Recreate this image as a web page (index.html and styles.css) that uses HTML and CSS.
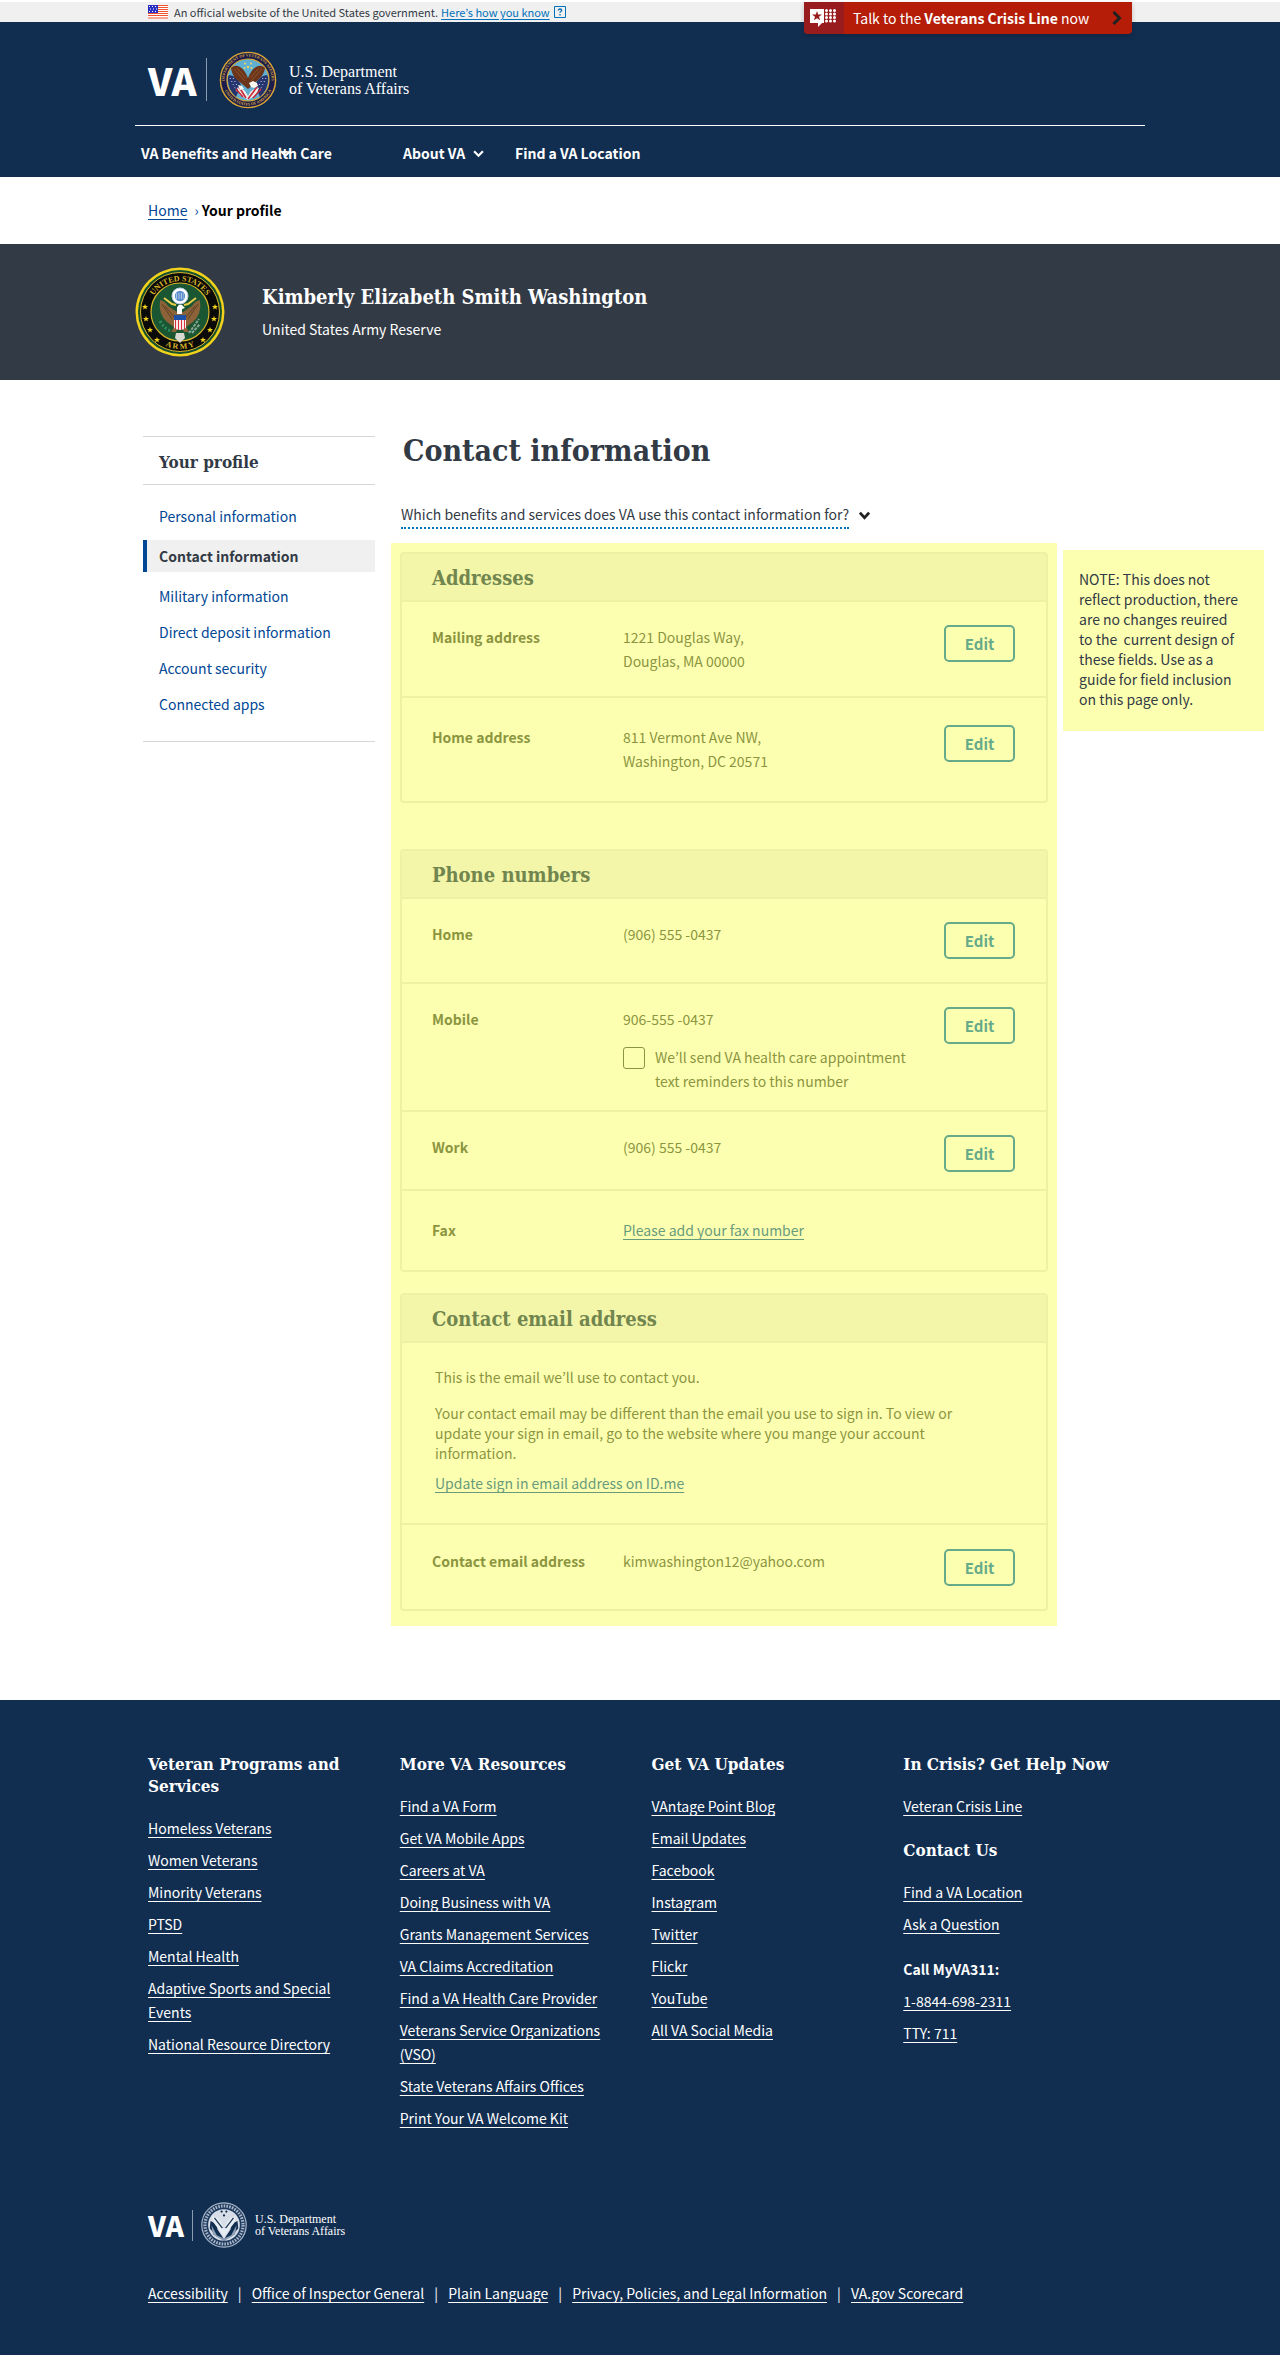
FILE: index.html
```html
<!DOCTYPE html>
<html lang="en">
<head>
<meta charset="utf-8">
<meta name="viewport" content="width=device-width, initial-scale=1">
<title>Contact information | Veterans Affairs</title>
<link rel="stylesheet" href="styles.css">
</head>
<body>
<div class="banner">
  <div class="wrap banner-row">
    <svg class="flag" viewBox="0 0 20 14" aria-hidden="true"><path fill="#fff" d="M0 0h20v14H0z"/><path stroke="#f0532d" d="M0 .5h20M0 2.5h20M0 4.5h20M0 6.5h20M0 8.5h20M0 10.5h20M0 13h20"/><path fill="#2a2fc4" d="M0 0h10v8H0z"/><path stroke="#fff" stroke-dasharray="1 2" d="M1 1.500h8M2 4h8M1 6.500h8"/></svg>
    <span>An official website of the United States government.</span>
    <a href="#know">Here’s how you know</a>
    <svg class="help" viewBox="0 0 12 12" aria-hidden="true"><path fill="none" stroke="#0071bb" d="M.5.5h11v11H.5z"/><path fill="none" stroke="#0071bb" stroke-width="1.300" d="M4.300 4.500q0-1.500 1.700-1.500t1.700 1.300q0 .8-.9 1.200t-.8 1.300M6 8v1.400"/></svg>
    <a class="crisis" href="#crisis">
      <span class="crisis-icon"><svg viewBox="0 0 30 20" aria-hidden="true"><path fill="#fff" d="M1 1h14v14h-2l-4 4v-4H1z"/><path fill="#981b1e" d="m8 3 1.200 3.500H13l-3 2.200 1.100 3.600L8 10.200l-3.100 2.100L6 8.700 3 6.500h3.800z"/><path stroke="#fff" stroke-width="3" stroke-linecap="round" stroke-dasharray="0 4" d="M17.500 2.500h12M17.500 6h12M17.500 9.500h12M17.500 13h12"/></svg></span>
      <span class="crisis-text">Talk to the <b>Veterans Crisis Line</b> now</span>
      <svg class="crisis-chev" viewBox="0 0 10 14" aria-hidden="true"><path fill="none" stroke="#212121" stroke-width="3" d="m1.500 1 6 6-6 6"/></svg>
    </a>
  </div>
</div>

<header class="header">
  <div class="wrap">
    <a class="logo" href="#home">
      <span class="logo-va">VA</span><span class="logo-bar"></span>
      <svg class="logo-seal" viewBox="0 0 58 58" aria-hidden="true">
        <defs><path id="va-top" d="M5.500 29a23.500 23.500 0 0 1 47 0"/><path id="va-bottom" d="M3.500 29a25.500 25.500 0 0 0 51 0"/></defs>
        <circle cx="29" cy="29" r="28.500" fill="#1c1b4d"/>
        <circle cx="29" cy="29" r="27.600" fill="none" stroke="#d9a935" stroke-width="1.400"/>
        <circle cx="29" cy="29" r="21" fill="#5fb0d2" stroke="#d9a935" stroke-width="1.200"/>
        <path fill="#25346e" d="M10 24q7 0 12 10l-5 12Q8 38 9 26zM48 24q-7 0-12 10l5 12q9-8 8-20z"/>
        <path stroke="#dfe6f3" stroke-dasharray="1 2.500" d="m11 27 7 14M14 27l6 11m27-11-7 14m4-14-6 11"/>
        <path fill="#f1efe8" d="M18 37q5 0 8 3l3 5 3-5q4-3 8-3l-3 7-8 5-8-5z"/>
        <path stroke="#c8283a" stroke-width="1.600" fill="none" d="m17 38 7 8m-4-10 7 11m15-9-8 9m4-11-9 12"/>
        <path fill="#6b351c" d="M12 17q4-4 9-1 5 3 8 11 3-8 8-11 5-3 9 1-1 7-6 11l-5 5-6 5-6-5-6-5q-4-4-5-11z"/>
        <path stroke="#8f5129" fill="none" d="m15 18 11 12m-8-13 9 10m16-9L32 30m8-13-9 10"/>
        <path fill="#faf7ef" d="m30 32 4-2 4 2 1 3-4 2-3-1zM19 34l4 1 2 3-4 1z"/>
        <g fill="#f3d65a"><circle cx="26" cy="12.500" r="1"/><circle cx="32" cy="12.500" r="1"/><circle cx="29" cy="16" r="1.200"/><circle cx="25.500" cy="17" r=".9"/><circle cx="32.500" cy="17" r=".9"/></g>
        <text class="seal-text" fill="#d9a935"><textPath href="#va-top" startOffset="50%">DEPARTMENT OF VETERANS AFFAIRS</textPath></text>
        <text class="seal-text" fill="#d9a935"><textPath href="#va-bottom" startOffset="50%">UNITED STATES OF AMERICA</textPath></text>
      </svg>
      <span class="logo-name">U.S. Department<br>of Veterans Affairs</span>
    </a>
    <nav class="nav" aria-label="Main">
      <button type="button" class="nav-item nav-benefits">VA Benefits and Health Care<svg class="chev over" viewBox="0 0 10 8" aria-hidden="true"><path fill="none" stroke="currentColor" stroke-width="2" d="m1 2 4 4 4-4"/></svg></button>
      <button type="button" class="nav-item nav-about">About VA <svg class="chev" viewBox="0 0 10 8" aria-hidden="true"><path fill="none" stroke="currentColor" stroke-width="2" d="m1 2 4 4 4-4"/></svg></button>
      <a class="nav-item" href="#find">Find a VA Location</a>
    </nav>
  </div>
</header>

<nav class="wrap crumbs" aria-label="Breadcrumb"><a href="#home">Home</a><span class="sep">›</span><b>Your profile</b></nav>

<section class="profile">
  <div class="wrap profile-row">
    <svg class="army" viewBox="0 0 90 90" aria-hidden="true">
      <defs><path id="army-top" d="M14 45a31 31 0 0 1 62 0"/><path id="army-bottom" d="M8 45a37 37 0 0 0 74 0"/></defs>
      <circle cx="45" cy="45" r="44.500" fill="#f2d21b"/><circle cx="45" cy="45" r="42" fill="#15502f"/>
      <circle cx="45" cy="45" r="39.500" fill="#0a0a08" stroke="#d9b62a"/>
      <circle cx="45" cy="45" r="29" fill="#1a5632" stroke="#d9b62a" stroke-width="1.200"/>
      <path fill="#8c6239" d="M25 33q5 1 8 6l9 6h6l9-6q3-5 8-6 2 14-7 22l-7 5 3 5h-5l-2-5h-4l-2 5h-5l3-5-7-5q-9-8-7-22z"/>
      <path fill="none" stroke="#5d4024" d="m27 37 10 15m-7-13 9 11m24-13L53 52m7-13-9 11"/>
      <path fill="none" stroke="#e9cf46" stroke-width="2" d="m29 31 8 6 4 1m20-7-8 6-4 1"/>
      <circle cx="45" cy="29" r="8" fill="#fff" stroke="#b9cde6"/><circle cx="45" cy="29" r="5.200" fill="#5d8fd0"/>
      <path stroke="#fff" stroke-dasharray="1 1.500" d="M41 27h8M41 29h8M41 31h8"/>
      <path fill="#fff" d="M42 41q1-4 5-3l3 3-3 1v5h-5zM39 50h12v11q-6 4-12 0z"/>
      <path fill="#1d52a8" d="M39 48h12v5H39z"/>
      <path stroke="#d6323b" stroke-width="1.200" d="M40.500 53v9m3-9v10m3-10v10m3-10v9"/>
      <path fill="#d9d9d2" d="M41 66h8l1 5-5 5-5-5z"/>
      <path fill="none" stroke="#2f8a61" stroke-width="3" stroke-dasharray="2 2" d="M25 54q5 9 12 10"/>
      <path fill="none" stroke="#87a596" stroke-width="2" stroke-dasharray="3 1" d="m54 66 10-14m-7 14 8-9"/>
      <g fill="#f2d21b"><path id="st" d="m10 37 .8 2 2.200.1-1.700 1.300.6 2.100-1.900-1.200-1.900 1.200.6-2.100L7 39.100l2.200-.1z"/><use href="#st" x="1" y="12"/><use href="#st" x="5" y="23"/><use href="#st" x="12" y="33"/><use href="#st" x="70"/><use href="#st" x="69" y="12"/><use href="#st" x="65" y="23"/><use href="#st" x="58" y="33"/></g>
      <text class="army-text" fill="#d9b62a"><textPath href="#army-top" startOffset="50%">UNITED STATES</textPath></text>
      <text class="army-text" fill="#d9b62a"><textPath href="#army-bottom" startOffset="50%">A R M Y</textPath></text>
    </svg>
    <div>
      <p class="profile-name">Kimberly Elizabeth Smith Washington</p>
      <p class="profile-branch">United States Army Reserve</p>
    </div>
  </div>
</section>

<div class="layout">
  <nav class="side" aria-label="Your profile">
    <h2>Your profile</h2>
    <ul>
      <li><a href="#personal">Personal information</a></li>
      <li><a class="current" href="#contact" aria-current="page">Contact information</a></li>
      <li><a href="#military">Military information</a></li>
      <li><a href="#deposit">Direct deposit information</a></li>
      <li><a href="#security">Account security</a></li>
      <li><a href="#apps">Connected apps</a></li>
    </ul>
  </nav>

  <main class="main">
    <h1>Contact information</h1>
    <button type="button" class="disclose"><span>Which benefits and services does VA use this contact information for?</span><svg class="chev" viewBox="0 0 10 8" aria-hidden="true"><path fill="none" stroke="#212121" stroke-width="2.500" d="m.8 1.500 4.200 4.500 4.200-4.500"/></svg></button>

    <div class="fields">
      <section class="card">
        <h2>Addresses</h2>
        <div class="row"><h3>Mailing address</h3><p>1221 Douglas Way,<br>Douglas, MA 00000</p><button type="button" class="edit" aria-label="Edit mailing address">Edit</button></div>
        <div class="row roomy"><h3>Home address</h3><p>811 Vermont Ave NW,<br>Washington, DC 20571</p><button type="button" class="edit" aria-label="Edit home address">Edit</button></div>
      </section>

      <section class="card phones">
        <h2>Phone numbers</h2>
        <div class="row"><h3>Home</h3><p>(906) 555 -0437</p><button type="button" class="edit" aria-label="Edit home phone">Edit</button></div>
        <div class="row tight"><h3>Mobile</h3>
          <div>
            <p>906-555 -0437</p>
            <div class="reminder"><input type="checkbox" id="reminders"><label for="reminders">We’ll send VA health care appointment text reminders to this number</label></div>
          </div>
          <button type="button" class="edit" aria-label="Edit mobile phone">Edit</button></div>
        <div class="row tight"><h3>Work</h3><p>(906) 555 -0437</p><button type="button" class="edit" aria-label="Edit work phone">Edit</button></div>
        <div class="row roomy"><h3>Fax</h3><p><a href="#fax">Please add your fax number</a></p></div>
      </section>

      <section class="card email">
        <h2>Contact email address</h2>
        <div class="about">
          <p>This is the email we’ll use to contact you.</p>
          <p>Your contact email may be different than the email you use to sign in. To view or update your sign in email, go to the website where you mange your account information.</p>
          <a href="#idme">Update sign in email address on ID.me</a>
        </div>
        <div class="row"><h3>Contact email address</h3><p>kimwashington12@yahoo.com</p><button type="button" class="edit" aria-label="Edit contact email address">Edit</button></div>
      </section>
    </div>
  </main>

  <aside class="note">NOTE: This does not<br>reflect production, there<br>are no changes reuired<br>to the&nbsp; current design of<br>these fields. Use as a<br>guide for field inclusion<br>on this page only.</aside>
</div>

<footer class="footer">
  <div class="foot-wrap">
    <div class="foot-cols">
      <section>
        <h2>Veteran Programs and Services</h2>
        <ul><li><a href="#f1">Homeless Veterans</a></li><li><a href="#f2">Women Veterans</a></li><li><a href="#f3">Minority Veterans</a></li><li><a href="#f4">PTSD</a></li><li><a href="#f5">Mental Health</a></li><li><a href="#f6">Adaptive Sports and Special Events</a></li><li><a href="#f7">National Resource Directory</a></li></ul>
      </section>
      <section>
        <h2>More VA Resources</h2>
        <ul><li><a href="#g1">Find a VA Form</a></li><li><a href="#g2">Get VA Mobile Apps</a></li><li><a href="#g3">Careers at VA</a></li><li><a href="#g4">Doing Business with VA</a></li><li><a href="#g5">Grants Management Services</a></li><li><a href="#g6">VA Claims Accreditation</a></li><li><a href="#g7">Find a VA Health Care Provider</a></li><li><a href="#g8">Veterans Service Organizations (VSO)</a></li><li><a href="#g9">State Veterans Affairs Offices</a></li><li><a href="#g10">Print Your VA Welcome Kit</a></li></ul>
      </section>
      <section>
        <h2>Get VA Updates</h2>
        <ul><li><a href="#h1">VAntage Point Blog</a></li><li><a href="#h2">Email Updates</a></li><li><a href="#h3">Facebook</a></li><li><a href="#h4">Instagram</a></li><li><a href="#h5">Twitter</a></li><li><a href="#h6">Flickr</a></li><li><a href="#h7">YouTube</a></li><li><a href="#h8">All VA Social Media</a></li></ul>
      </section>
      <section>
        <h2>In Crisis? Get Help Now</h2>
        <ul><li><a href="#i1">Veteran Crisis Line</a></li></ul>
        <h2>Contact Us</h2>
        <ul><li><a href="#i2">Find a VA Location</a></li><li><a href="#i3">Ask a Question</a></li></ul>
        <h3>Call MyVA311:</h3>
        <ul><li><a href="#i4">1-8844-698-2311</a></li><li><a href="#i5">TTY: 711</a></li></ul>
      </section>
    </div>
    <a class="foot-logo" href="#home">
      <span class="foot-va">VA</span><span class="foot-bar"></span>
      <svg class="foot-seal" viewBox="0 0 58 58" aria-hidden="true">
        <circle cx="29" cy="29" r="28" fill="#1e3a5e" stroke="#a9b6c8" stroke-width="1.500"/>
        <circle cx="29" cy="29" r="24" fill="none" stroke="#a9b6c8" stroke-width="4" stroke-dasharray="2 1.500"/>
        <circle cx="29" cy="29" r="20" fill="#d7dee8"/>
        <path fill="#112e51" d="M12 24q7 2 9 11l8 12 8-12q2-9 9-11l1 9-8 10-10 6-10-6-8-10z"/>
        <path fill="#8fa2b9" d="m13 29 7 13 9 4 9-4 7-13-2 12-14 8-14-8z"/>
        <path fill="#e8edf3" d="M14 18q8 0 13 11l2 7 2-7q5-11 13-11-1 9-7 14l-8 12-8-12q-6-5-7-14z"/>
        <path stroke="#112e51" stroke-width="1.500" fill="none" d="m17 20 10 13m14-13L31 33"/>
        <g fill="#112e51"><circle cx="26" cy="12" r="1.400"/><circle cx="32" cy="12" r="1.400"/><circle cx="29" cy="17" r="1.400"/></g>
      </svg>
      <span class="foot-name">U.S. Department<br>of Veterans Affairs</span>
    </a>
    <ul class="legal"><li><a href="#j1">Accessibility</a></li><li><a href="#j2">Office of Inspector General</a></li><li><a href="#j3">Plain Language</a></li><li><a href="#j4">Privacy, Policies, and Legal Information</a></li><li><a href="#j5">VA.gov Scorecard</a></li></ul>
  </div>
</footer>
</body>
</html>
```
FILE: styles.css
```css
:root {
  --navy: #112e51;
  --ink: #323a45;
  --link: #004795;
  --yellow: #fdffb0;
  --line: #eef0a2;
  --olive: #8b9540;
  --teal: #66aa8a;
  --sans: "Noto Sans CJK JP", "Noto Sans", sans-serif;
  --slab: "DejaVu Serif Condensed", "DejaVu Serif", serif;
}

* { box-sizing: border-box; }
body { margin: 0; background: #fff; color: var(--ink); font: 14px/24px var(--sans); }
h1, h2, h3, p, ul { margin: 0; padding: 0; }
ul { list-style: none; }
button { padding: 0; border: 0; background: none; color: inherit; font: inherit; cursor: pointer; }
svg { display: block; flex: none; }
a { color: var(--link); text-underline-offset: 3px; }
.wrap { max-width: 1010px; margin: 0 auto; }

/* Government banner */
.banner { margin-top: 2px; background: #f0f0f0; font-size: 11px; line-height: 20px; }
.banner-row { position: relative; display: flex; align-items: center; padding-left: 13px; }
.banner a:not(.crisis) { margin: 0 4px 0 3px; color: #0071bb; text-underline-offset: 2px; }
.flag { width: 20px; height: 14px; margin-right: 6px; }
.help { width: 12px; height: 12px; }
.crisis { position: absolute; top: 0; right: 13px; display: flex; align-items: center; width: 328px; height: 32px; overflow: hidden; border-radius: 0 0 4px 4px; background: #b51d09; box-shadow: 0 2px 5px #0003; color: #fff; font-size: 14px; text-decoration: none; }
.crisis-icon { display: flex; align-items: center; justify-content: center; width: 40px; height: 100%; background: #981b1e; }
.crisis-icon svg { width: 30px; height: 20px; }
.crisis-text { flex: 1; padding-left: 9px; white-space: nowrap; }
.crisis-chev { width: 10px; height: 14px; margin-right: 10px; }

/* Header */
.header { background: var(--navy); color: #fff; }
.logo { display: flex; align-items: center; height: 104px; padding: 12px 0 0 13px; border-bottom: 1px solid #fff; color: #fff; text-decoration: none; }
.logo-va { width: 48px; font-size: 38px; font-weight: 900; line-height: 40px; }
.logo-bar { width: 1px; height: 43px; margin: 0 12px 0 10px; background: #8b9bb0; }
.logo-seal { width: 58px; height: 58px; }
.logo-name { margin-left: 12px; font: 16px/17px "Liberation Serif", serif; }
.seal-text { font: bold 4px "Liberation Serif", serif; text-anchor: middle; }
.nav { display: flex; align-items: center; height: 51px; padding: 3px 0 0 6px; }
.nav-item { position: relative; display: flex; align-items: center; color: #fff; font-weight: bold; text-decoration: none; }
.nav-benefits { width: 262px; }
.nav-about { width: 112px; gap: 8px; }
.chev { width: 11px; height: 9px; }
.over { position: absolute; left: 139px; top: 8px; }

.crumbs { display: flex; align-items: center; height: 67px; padding: 0 0 2px 13px; color: #000; }
.sep { margin: 0 3px 0 7px; color: var(--link); }

/* Profile bar */
.profile { background: var(--ink); color: #fff; }
.profile-row { display: flex; align-items: center; gap: 37px; min-height: 136px; }
.army { width: 90px; height: 90px; }
.army-text { font: bold 8px "Liberation Serif", serif; text-anchor: middle; }
.profile-name { margin-bottom: 6px; font: bold 20px/28px var(--slab); }

/* Page body */
.layout { display: grid; grid-template-columns: 232px minmax(0, 666px) 201px; justify-content: start; padding: 53px 16px 74px 143px; }
.side { margin: 3px 0 auto; border: solid #d6d7d9; border-width: 1px 0; }
.side h2 { padding: 13px 16px 10px; border-bottom: 1px solid #d6d7d9; font: bold 17px/24px var(--slab); }
.side ul { display: grid; gap: 12px; padding: 19px 0 25px; }
.side a { display: block; padding-left: 16px; text-decoration: none; }
.side .current { padding-left: 12px; border-left: 4px solid var(--link); background: #f0f0f0; color: var(--ink); font-weight: bold; line-height: 32px; }
.main { margin-left: 16px; margin-right: -16px; }
.main h1 { padding-left: 12px; font: bold 30px/36px var(--slab); }
.disclose { display: flex; align-items: flex-start; gap: 10px; margin: 33px 0 14px 10px; text-align: left; }
.disclose span { padding-bottom: 1px; border-bottom: 2px dotted #0071bb; }
.disclose .chev { margin-top: 9px; }

/* Editable fields */
.fields { padding: 9px 9px 15px; background: var(--yellow); color: var(--olive); }
.card { border: 2px solid var(--line); border-radius: 4px; }
.card h2 { padding: 12px 30px 10px; border-bottom: 2px solid var(--line); background: #f3f5a8; color: #71864f; font: bold 20px/24px var(--slab); }
.card h3 { font-size: 14px; }
.card a { color: #689b7c; }
.phones { margin: 46px 0 21px; }
.row { display: grid; grid-template-columns: 191px minmax(0, 1fr) 71px; align-items: start; padding: 23px 31px 23px 30px; border-bottom: 2px solid var(--line); }
.row:last-child { border-bottom: 0; }
.row.tight { padding-bottom: 17px; }
.row.roomy { padding-top: 27px; padding-bottom: 28px; }
.email .row { padding-top: 24px; }
.edit { height: 37px; border: 2px solid var(--teal); border-radius: 5px; color: var(--teal); font-size: 15px; font-weight: bold; }
.reminder { display: flex; gap: 10px; max-width: 302px; margin-top: 14px; }
.reminder input { flex: none; width: 22px; height: 22px; margin: 2px 0 0; appearance: none; border: 1px solid var(--olive); border-radius: 3px; }
.about { padding: 24px 80px 30px 33px; border-bottom: 2px solid var(--line); line-height: 20px; }
.about p { max-width: 550px; margin-bottom: 16px; }
.about p + p { margin-bottom: 10px; }
.about a { display: block; }

.note { margin: 117px -22px auto 22px; padding: 19px 0 22px 16px; background: var(--yellow); line-height: 20px; }

/* Footer */
.footer { background: var(--navy); color: #fff; }
.footer a { color: #fff; }
.foot-wrap { max-width: 1030px; margin: 0 auto; padding: 53px 0 51px 23px; }
.foot-cols { display: grid; grid-template-columns: repeat(4, minmax(0, 1fr)); }
.foot-cols section { padding-right: 36px; }
.foot-cols h2 { margin-bottom: 19px; font: bold 17px/22px var(--slab); }
.foot-cols h3 { margin: 21px 0 8px; font-size: 14px; }
.foot-cols ul { display: grid; gap: 8px; }
.foot-cols ul + h2 { margin-top: 21px; }
.foot-logo { display: flex; align-items: center; margin-top: 72px; text-decoration: none; }
.foot-va { width: 36px; font-size: 28px; font-weight: 900; line-height: 28px; }
.foot-bar { width: 1px; height: 31px; margin: 0 8px; background: #8b9bb0; }
.foot-seal { width: 46px; height: 46px; }
.foot-name { margin-left: 8px; font: 12px/12px "Liberation Serif", serif; }
.legal { display: flex; flex-wrap: wrap; margin-top: 33px; }
.legal li + li::before { content: "|"; display: inline-block; width: 24px; text-align: center; }
```
